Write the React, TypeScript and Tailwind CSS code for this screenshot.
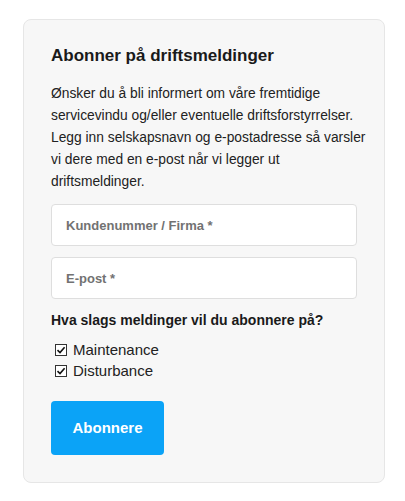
const checkboxes = ['Maintenance', 'Disturbance'];

export default function App() {
  return (
    <div className="min-h-screen bg-white pl-[23px] pr-[20px] pt-[19px] pb-[18px]" style={{ fontFamily: '"Liberation Sans", Arial, sans-serif' }}>
      <div className="rounded-lg border border-[#e6e6e6] bg-[#f7f7f7] px-[27px] pt-[24px] pb-[27px]">
        <h2 className="text-[17px] font-bold leading-[24px] text-[#1a1a1a]">Abonner på driftsmeldinger</h2>
        <p className="mt-[15px] whitespace-nowrap text-[13.8px] leading-[22px] text-[#222]">
          Ønsker du å bli informert om våre fremtidige
          <br />
          servicevindu og/eller eventuelle driftsforstyrrelser.
          <br />
          Legg inn selskapsnavn og e-postadresse så varsler
          <br />
          vi dere med en e-post når vi legger ut
          <br />
          driftsmeldinger.
        </p>
        <div className="mt-[11px] flex flex-col gap-[11px]">
          <input
            placeholder="Kundenummer / Firma *"
            className="h-[42px] w-full rounded border border-[#dedede] bg-white px-[14px] text-[13px] font-bold outline-none placeholder:text-[#727272]"
          />
          <input
            placeholder="E-post *"
            className="h-[42px] w-full rounded border border-[#dedede] bg-white px-[14px] text-[13px] font-bold outline-none placeholder:text-[#727272]"
          />
        </div>
        <h3 className="mt-[11px] text-[14px] font-bold leading-[20px] text-[#1a1a1a]">Hva slags meldinger vil du abonnere på?</h3>
        <div className="mt-[9px] flex flex-col">
          {checkboxes.map((label) => (
            <label key={label} className="flex items-center gap-[6px] text-[15px] leading-[21px] text-[#222]">
              <span className="ml-[4px] flex h-[12px] w-[12px] items-center justify-center border border-[#333] bg-white">
                <svg viewBox="0 0 10 10" className="h-[10px] w-[10px]">
                  <path d="M1.5 5.2 L4 7.6 L8.6 2.2" fill="none" stroke="#111" strokeWidth="1.6" />
                </svg>
              </span>
              {label}
            </label>
          ))}
        </div>
        <button className="mt-[20px] h-[54px] w-[113px] rounded bg-[#0ba3f7] text-[15px] font-bold text-white">
          Abonnere
        </button>
      </div>
    </div>
  );
}
